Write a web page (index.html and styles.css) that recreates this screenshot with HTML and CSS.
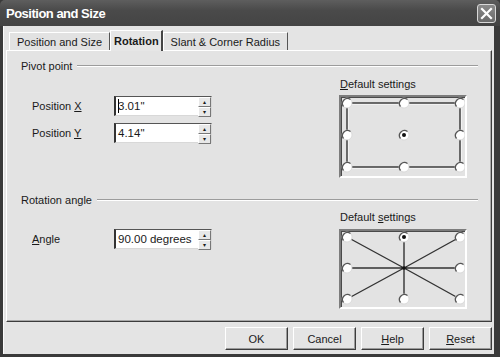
FILE: index.html
```html
<!DOCTYPE html>
<html lang="en">
<head>
    <meta charset="UTF-8">
    <title>Position and Size</title>
    <link rel="stylesheet" href="styles.css">
</head>
<body>
    <div class="window">
        <div class="titlebar">
            <span class="title">Position and Size</span>
            <span class="close">
                <svg width="13" height="13" viewBox="0 0 13 13"><path d="M2 2 L11 11 M11 2 L2 11" stroke="#fff" stroke-width="2.2" stroke-linecap="square"/></svg>
            </span>
        </div>
        <div class="client">
            <div class="tabs">
                <div class="tab">Position and Size</div>
                <div class="tab active">Rotation</div>
                <div class="tab">Slant &amp; Corner Radius</div>
            </div>
            <div class="panel">
                <div class="group-head"><span>Pivot point</span><i></i></div>
                <div class="group-body">
                    <div class="fields first">
                        <div class="field">
                            <label>Position <u>X</u></label>
                            <div class="spin"><span class="value"><b class="caret"></b>3.01"</span><span class="arrows"><em>&#9652;</em><em>&#9662;</em></span></div>
                        </div>
                        <div class="field">
                            <label>Position <u>Y</u></label>
                            <div class="spin"><span class="value">4.14"</span><span class="arrows"><em>&#9652;</em><em>&#9662;</em></span></div>
                        </div>
                    </div>
                    <div class="preset first">
                        <div class="preset-label"><u>D</u>efault settings</div>
                        <div class="preset-box box-a">
                            <svg width="124" height="79" viewBox="0 0 124 79">
                                <rect x="6" y="6" width="113" height="64" fill="none" stroke="#fff" stroke-width="1" transform="translate(1 1)"/>
                                <rect x="6" y="6" width="113" height="64" fill="none" stroke="#333" stroke-width="1.4"/>
                                <g class="radio"><circle cx="6" cy="6" r="5"/><path d="M2.5 9.5 A5 5 0 0 1 9.5 2.5"/></g>
                                <g class="radio"><circle cx="63" cy="6" r="5"/><path d="M59.5 9.5 A5 5 0 0 1 66.5 2.5"/></g>
                                <g class="radio"><circle cx="119" cy="6" r="5"/><path d="M115.5 9.5 A5 5 0 0 1 122.5 2.5"/></g>
                                <g class="radio"><circle cx="6" cy="38" r="5"/><path d="M2.5 41.5 A5 5 0 0 1 9.5 34.5"/></g>
                                <g class="radio"><circle cx="63" cy="38" r="5"/><path d="M59.5 41.5 A5 5 0 0 1 66.5 34.5"/><circle class="dot" cx="63" cy="38" r="2"/></g>
                                <g class="radio"><circle cx="119" cy="38" r="5"/><path d="M115.5 41.5 A5 5 0 0 1 122.5 34.5"/></g>
                                <g class="radio"><circle cx="6" cy="70" r="5"/><path d="M2.5 73.5 A5 5 0 0 1 9.5 66.5"/></g>
                                <g class="radio"><circle cx="63" cy="70" r="5"/><path d="M59.5 73.5 A5 5 0 0 1 66.5 66.5"/></g>
                                <g class="radio"><circle cx="119" cy="70" r="5"/><path d="M115.5 73.5 A5 5 0 0 1 122.5 66.5"/></g>
                            </svg>
                        </div>
                    </div>
                </div>

                <div class="group-head second"><span>Rotation angle</span><i></i></div>
                <div class="group-body">
                    <div class="fields">
                        <div class="field">
                            <label><u>A</u>ngle</label>
                            <div class="spin"><span class="value">90.00 degrees</span><span class="arrows"><em>&#9652;</em><em>&#9662;</em></span></div>
                        </div>
                    </div>
                    <div class="preset">
                        <div class="preset-label">Default <u>s</u>ettings</div>
                        <div class="preset-box box-b">
                            <svg width="124" height="76" viewBox="0 0 124 76">
                                <g stroke="#333" stroke-width="1.4">
                                    <path d="M63 37 L6 6 M63 37 L63 6 M63 37 L119 6 M63 37 L6 37 M63 37 L119 37 M63 37 L6 68 M63 37 L63 68 M63 37 L119 68"/>
                                </g>
                                <circle cx="63" cy="37" r="1.8" fill="#111"/>
                                <g class="radio"><circle cx="6" cy="6" r="5"/><path d="M2.5 9.5 A5 5 0 0 1 9.5 2.5"/></g>
                                <g class="radio"><circle cx="63" cy="6" r="5"/><path d="M59.5 9.5 A5 5 0 0 1 66.5 2.5"/><circle class="dot" cx="63" cy="6" r="2"/></g>
                                <g class="radio"><circle cx="119" cy="6" r="5"/><path d="M115.5 9.5 A5 5 0 0 1 122.5 2.5"/></g>
                                <g class="radio"><circle cx="6" cy="37" r="5"/><path d="M2.5 40.5 A5 5 0 0 1 9.5 33.5"/></g>
                                <g class="radio"><circle cx="119" cy="37" r="5"/><path d="M115.5 40.5 A5 5 0 0 1 122.5 33.5"/></g>
                                <g class="radio"><circle cx="6" cy="68" r="5"/><path d="M2.5 71.5 A5 5 0 0 1 9.5 64.5"/></g>
                                <g class="radio"><circle cx="63" cy="68" r="5"/><path d="M59.5 71.5 A5 5 0 0 1 66.5 64.5"/></g>
                                <g class="radio"><circle cx="119" cy="68" r="5"/><path d="M115.5 71.5 A5 5 0 0 1 122.5 64.5"/></g>
                            </svg>
                        </div>
                    </div>
                </div>
            </div>
            <div class="buttons">
                <button>OK</button>
                <button>Cancel</button>
                <button><u>H</u>elp</button>
                <button><u>R</u>eset</button>
            </div>
        </div>
    </div>
</body>
</html>
```

FILE: styles.css
```css
body, html {
    margin: 0;
    padding: 0;
    background-color: #3a3a3a;
}
body {
    font-family: "Liberation Sans", Arial, sans-serif;
    font-size: 11px;
    color: #1a1a1a;
}
u {
    text-decoration: underline;
    text-underline-offset: 1px;
}
.window {
    width: 500px;
    height: 357px;
    display: flex;
    flex-direction: column;
    background-color: #3a3a3a;
}
.titlebar {
    height: 26px;
    display: flex;
    align-items: center;
    justify-content: space-between;
    padding: 0 4px 0 6px;
    background: linear-gradient(#5e5e5e, #4a4a4a 40%, #444);
    border-radius: 5px 5px 0 0;
}
.title {
    color: #fff;
    font-weight: bold;
    font-size: 13px;
    letter-spacing: -0.5px;
}
.close {
    width: 17px;
    height: 17px;
    display: flex;
    align-items: center;
    justify-content: center;
    background: linear-gradient(#8a8a8a, #6a6a6a);
    border: 1px solid #d8d8d8;
    border-radius: 3px;
}
.client {
    flex: 1;
    margin: 0 6px 3px 3px;
    padding-top: 4px;
    background-color: #e4e4e4;
    border-left: 1px solid #fafafa;
    display: flex;
    flex-direction: column;
}
.tabs {
    display: flex;
    align-items: flex-end;
    height: 20px;
    margin-left: 5px;
    position: relative;
    z-index: 1;
}
.tab {
    height: 18px;
    line-height: 18px;
    padding: 0 7px;
    background-color: #e2e2e2;
    border-top: 1px solid #fff;
    border-left: 1px solid #fff;
    border-right: 1px solid #555;
    box-sizing: border-box;
}
.tab.active {
    height: 21px;
    line-height: 20px;
    margin-bottom: -1px;
    font-weight: bold;
    background-color: #e6e6e6;
    padding: 0 2px 0 3px;
    border-right: 2px solid #444;
}
.panel {
    height: 272px;
    box-sizing: border-box;
    margin: 0 0 0 2px;
    width: 486px;
    padding: 0 13px 0 14px;
    background-color: #e3e3e3;
    border-top: 1px solid #fff;
    border-left: 1px solid #fff;
    border-right: 1px solid #3c3c3c;
    border-bottom: 1px solid #3c3c3c;
    box-shadow: inset -1px -1px #a8a8a8;
}
.group-head {
    display: flex;
    align-items: center;
    height: 14px;
    margin-top: 8px;
}
.group-head.second {
    margin-top: 15px;
}
.group-head i {
    flex: 1;
    margin-left: 5px;
    border-top: 1px solid #9c9c9c;
    border-bottom: 1px solid #fff;
}
.group-body {
    display: flex;
    justify-content: space-between;
}
.fields {
    margin-left: 11px;
    padding-top: 22px;
    display: flex;
    flex-direction: column;
    gap: 7px;
}
.fields.first {
    padding-top: 23px;
}
.field {
    display: flex;
    align-items: center;
}
.field label {
    width: 82px;
}
.spin {
    width: 98px;
    height: 20px;
    box-sizing: border-box;
    display: flex;
    background-color: #fff;
    border-top: 1px solid #555;
    border-left: 2px solid #333;
    border-right: 1px solid #d8d8d8;
    border-bottom: 1px solid #d8d8d8;
}
.spin .value {
    flex: 1;
    padding-left: 2px;
    line-height: 18px;
    font-size: 11.5px;
}
.caret {
    display: inline-block;
    width: 1px;
    height: 14px;
    margin-right: -1px;
    vertical-align: -3px;
    background-color: #000;
}
.arrows {
    width: 13px;
    display: flex;
    flex-direction: column;
}
.arrows em {
    flex: 1;
    font-style: normal;
    font-size: 6px;
    line-height: 8px;
    text-align: center;
    background-color: #e8e8e8;
    border-top: 1px solid #fff;
    border-left: 1px solid #fff;
    border-bottom: 1px solid #777;
    border-right: 1px solid #777;
}
.preset {
    margin-right: 11px;
    padding-top: 3px;
}
.preset.first {
    padding-top: 4px;
}
.preset-label {
    height: 14px;
    line-height: 14px;
    margin-left: 1px;
}
.preset-box {
    margin-top: 4px;
    border: 2px solid;
    border-color: #7c7c7c #fff #fff #7c7c7c;
    box-shadow: inset 1px 1px #4a4a4a;
    display: flex;
}
.box-b {
    margin-top: 5px;
}
.radio circle {
    fill: #fff;
    stroke: #d4d4d4;
    stroke-width: 0.8;
}
.radio path {
    fill: none;
    stroke: #555;
    stroke-width: 1.3;
}
.radio circle.dot {
    fill: #111;
    stroke: none;
}
.buttons {
    display: flex;
    justify-content: flex-end;
    gap: 5px;
    margin-top: 5px;
    padding-right: 2px;
}
.buttons button {
    width: 63px;
    height: 23px;
    padding: 0;
    font-family: "Liberation Sans", Arial, sans-serif;
    font-size: 11px;
    color: #1a1a1a;
    background-color: #e4e4e4;
    border: 1px solid;
    border-color: #fff #3c3c3c #3c3c3c #fff;
    box-shadow: inset -1px -1px #9a9a9a;
}
```
